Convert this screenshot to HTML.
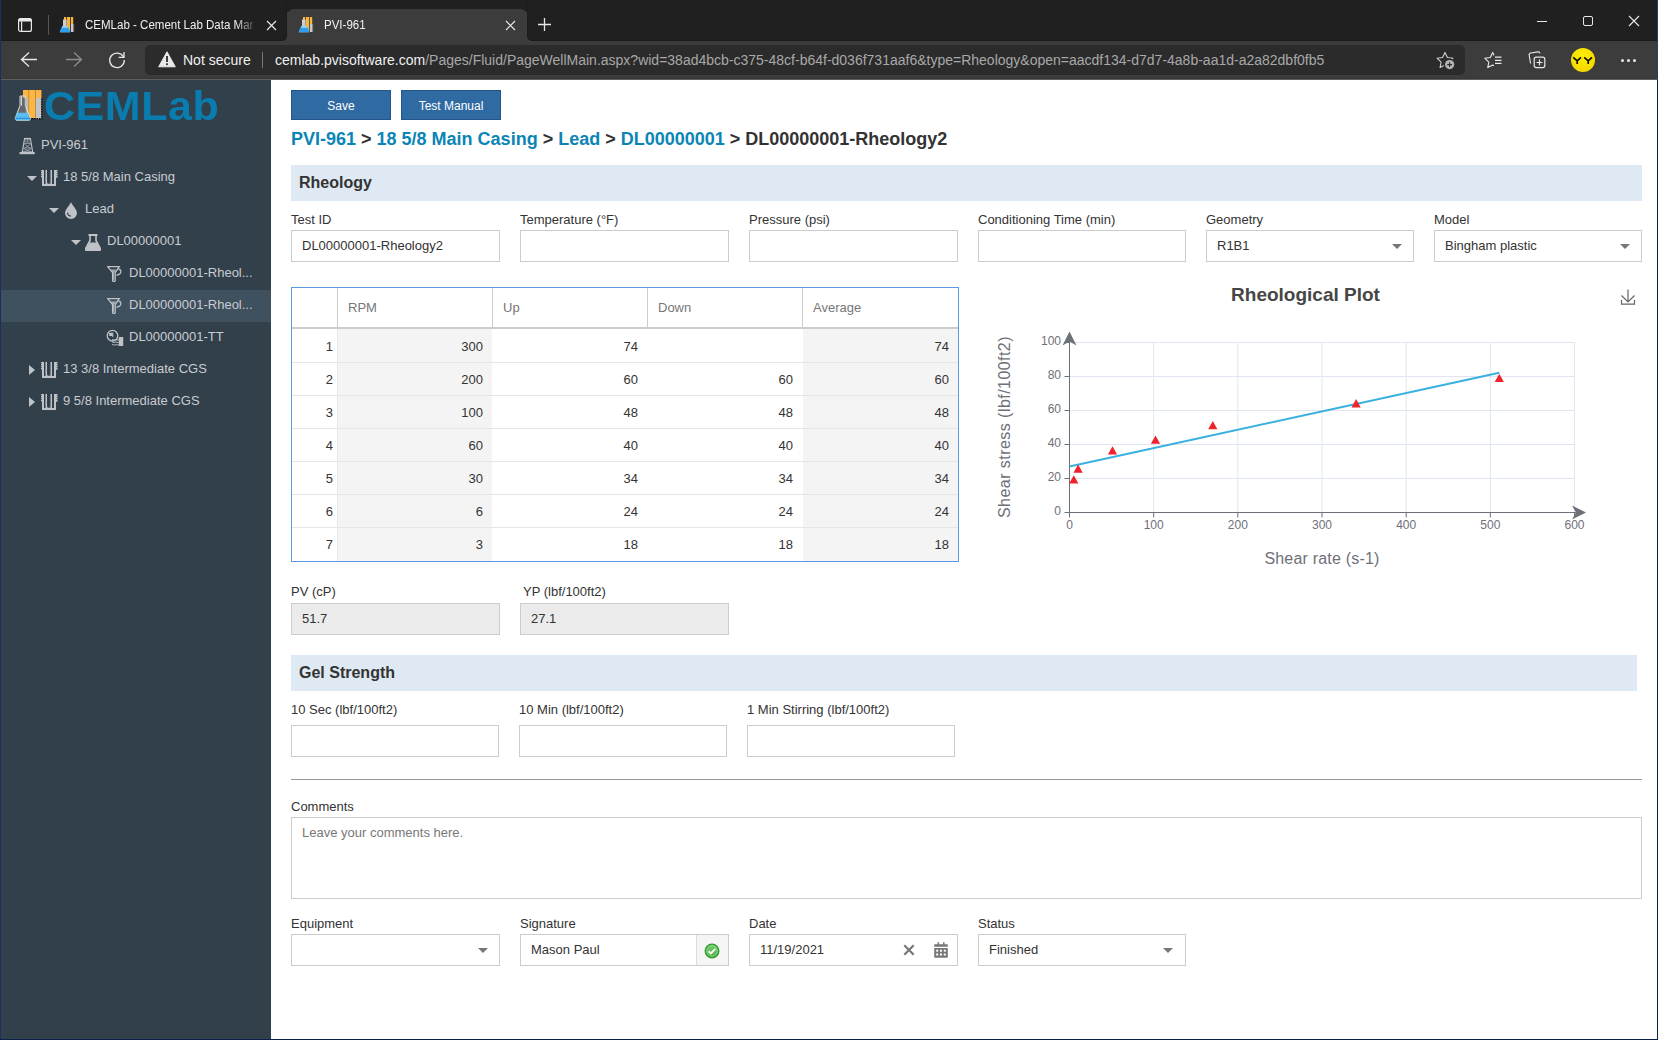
<!DOCTYPE html>
<html><head><meta charset="utf-8">
<style>
*{box-sizing:border-box;margin:0;padding:0}
html,body{width:1658px;height:1040px;overflow:hidden;background:#202020;font-family:"Liberation Sans",sans-serif}
.a{position:absolute}
#tabbar{left:0;top:0;width:1658px;height:79px;background:#3c3c3c}
#toolbar{left:0;top:0;width:0;height:0}
#tbline{left:0;top:78px;width:1658px;height:2px;background:linear-gradient(#383838 50%,#5e5e5e 50%)}
#side{left:0;top:80px;width:271px;height:960px;background:#32404c}
#main{left:271px;top:80px;width:1387px;height:960px;background:#fff}
.bl{background:#1a2a5a}
.lbl{position:absolute;font-size:13px;color:#333;line-height:15px;white-space:nowrap}
.inp{position:absolute;height:32px;border:1px solid #ccc;background:#fff;font-size:13px;color:#333;line-height:30px;padding-left:10px;white-space:nowrap}
.ro{background:#ebebeb}
.hdr{position:absolute;left:291px;height:36px;background:#dee9f4;font-size:16px;font-weight:bold;color:#333;line-height:36px;padding-left:8px}
.caret{position:absolute;width:0;height:0;border-left:5px solid transparent;border-right:5px solid transparent;border-top:5px solid #777}
.tree{position:absolute;font-size:13px;color:#c9ccd0;line-height:16px;white-space:nowrap}
.tri{position:absolute;width:0;height:0;border-left:5px solid transparent;border-right:5px solid transparent;border-top:5px solid #c0c4c8}
.trr{position:absolute;width:0;height:0;border-top:5px solid transparent;border-bottom:5px solid transparent;border-left:5px solid #c0c4c8}
.btn{height:30px;width:100px;background:#2f6aa3;border:1px solid #23558a;color:#fff;font-size:12px;line-height:30px;text-align:center}
.bc{font-size:18px;font-weight:bold;color:#333;line-height:20px;white-space:nowrap}
.lk{color:#0b85b6}
.th{color:#777}
.num{text-align:right}
.logo{font-size:41px;font-weight:bold;color:#0a7db0;line-height:48px;letter-spacing:0.5px;transform:scaleX(1.05);transform-origin:0 0;white-space:nowrap}
.tabt{font-size:12px;transform:scaleX(0.96);transform-origin:0 0;color:#f0f0f0;line-height:16px;white-space:nowrap}
.urlt{font-size:14px;line-height:18px;white-space:nowrap}
.ct{font-size:12px;fill:#6e7079;font-family:"Liberation Sans",sans-serif}
.cn{font-size:16px;fill:#6e7079;font-family:"Liberation Sans",sans-serif}
</style></head><body>
<div id="tabbar" class="a"></div>
<div id="toolbar" class="a"></div>
<div id="tbline" class="a"></div>
<div class="a" style="left:0;top:0;width:287px;height:41px;background:#202020;border-bottom:1px solid #1b1b1b;border-right:1px solid #1d1d1d;border-radius:0 0 5px 0"></div>
<div class="a" style="left:527px;top:0;width:1131px;height:41px;background:#202020;border-bottom:1px solid #1b1b1b;border-left:1px solid #1d1d1d;border-radius:0 0 0 5px"></div>
<div class="a" style="left:287px;top:0;width:240px;height:12px;background:#202020"></div>
<svg class="a" style="left:17px;top:17px" width="16" height="16" viewBox="0 0 16 16">
<rect x="1.6" y="1.6" width="12.8" height="12.8" rx="2" fill="none" stroke="#e8e8e8" stroke-width="1.2"/>
<rect x="1.6" y="1.6" width="12.8" height="3" rx="1" fill="#e8e8e8"/>
<path d="M4.6 4.5v10" stroke="#e8e8e8" stroke-width="1.2"/>
</svg>
<div class="a" style="left:48px;top:15px;width:1px;height:20px;background:#555"></div>
<svg class="a" style="left:59px;top:17px" width="16" height="16" viewBox="0 0 16 16">
<rect x="5" y="0" width="2.2" height="14" fill="#f7b638"/><rect x="8" y="0" width="3" height="14" fill="#f7b638"/><rect x="11.8" y="0" width="2.4" height="7" fill="#f7b638"/>
<rect x="11.8" y="7" width="2.4" height="8" fill="#c9c9c9"/><path d="M14.2 8h1M14.2 10h1M14.2 12h1M14.2 14h1" stroke="#e0e0e0" stroke-width="0.8"/>
<path d="M4 2.5h3.6v6l3.4 6.8h-10.4l3.4-6.8z" fill="#cfcfcf"/>
<path d="M2.4 10.5h7.2l1.6 4.8h-10.4z" fill="#2f9ef0"/><path d="M3.5 9h5l0.8 1.5h-6.6z" fill="#8fd3ff"/>
</svg>
<div class="a tabt" style="left:85px;top:17px;width:175px;overflow:hidden">CEMLab - Cement Lab Data Man</div>
<div class="a" style="left:236px;top:14px;width:24px;height:20px;background:linear-gradient(to right,rgba(32,32,32,0),#202020 90%)"></div>
<svg class="a" style="left:265.5px;top:19.5px" width="11" height="11" viewBox="0 0 11 11"><path d="M1 1L10 10M10 1L1 10" stroke="#e8e8e8" stroke-width="1.2"/></svg>
<div class="a" style="left:287px;top:9px;width:240px;height:32px;background:#3c3c3c;border-radius:7px 7px 0 0"></div>
<svg class="a" style="left:298px;top:17px" width="16" height="16" viewBox="0 0 16 16">
<rect x="5" y="0" width="2.2" height="14" fill="#f7b638"/><rect x="8" y="0" width="3" height="14" fill="#f7b638"/><rect x="11.8" y="0" width="2.4" height="7" fill="#f7b638"/>
<rect x="11.8" y="7" width="2.4" height="8" fill="#c9c9c9"/><path d="M14.2 8h1M14.2 10h1M14.2 12h1M14.2 14h1" stroke="#e0e0e0" stroke-width="0.8"/>
<path d="M4 2.5h3.6v6l3.4 6.8h-10.4l3.4-6.8z" fill="#cfcfcf"/>
<path d="M2.4 10.5h7.2l1.6 4.8h-10.4z" fill="#2f9ef0"/><path d="M3.5 9h5l0.8 1.5h-6.6z" fill="#8fd3ff"/>
</svg>
<div class="a tabt" style="left:324px;top:17px">PVI-961</div>
<svg class="a" style="left:504.5px;top:19.5px" width="11" height="11" viewBox="0 0 11 11"><path d="M1 1L10 10M10 1L1 10" stroke="#e8e8e8" stroke-width="1.2"/></svg>
<svg class="a" style="left:537px;top:17px" width="15" height="15" viewBox="0 0 15 15"><path d="M7.5 1v13M1 7.5h13" stroke="#e8e8e8" stroke-width="1.3"/></svg>
<div class="a" style="left:1537px;top:21px;width:10px;height:1px;background:#e8e8e8"></div>
<div class="a" style="left:1583px;top:16px;width:10px;height:10px;border:1px solid #e8e8e8;border-radius:2px"></div>
<svg class="a" style="left:1628.0px;top:15.0px" width="12" height="12" viewBox="0 0 12 12"><path d="M1 1L11 11M11 1L1 11" stroke="#e8e8e8" stroke-width="1.1"/></svg>
<svg class="a" style="left:19px;top:51px" width="20" height="17" viewBox="0 0 20 17"><path d="M10 1.5L2.5 8.5L10 15.5M2.5 8.5H18" fill="none" stroke="#e8e8e8" stroke-width="1.3"/></svg>
<svg class="a" style="left:64px;top:51px" width="20" height="17" viewBox="0 0 20 17"><path d="M10 1.5L17.5 8.5L10 15.5M17.5 8.5H2" fill="none" stroke="#8c8c8c" stroke-width="1.3"/></svg>
<svg class="a" style="left:107px;top:50px" width="20" height="20" viewBox="0 0 20 20"><path d="M16.5 7A7.3 7.3 0 1 0 17.3 10" fill="none" stroke="#e8e8e8" stroke-width="1.3"/><path d="M17 2v5.3h-5.3" fill="none" stroke="#e8e8e8" stroke-width="1.3"/></svg>
<div class="a" style="left:145px;top:45px;width:1320px;height:30px;background:#2b2b2b;border-radius:5px"></div>
<svg class="a" style="left:158px;top:51px" width="18" height="17" viewBox="0 0 18 17"><path d="M9 0.8L17.3 15.8H0.7z" fill="#e8e8e8" stroke="#e8e8e8" stroke-width="1" stroke-linejoin="round"/><rect x="8.1" y="5" width="1.8" height="6" fill="#2b2b2b"/><rect x="8.1" y="12.3" width="1.8" height="1.8" fill="#2b2b2b"/></svg>
<div class="a urlt" style="left:183px;top:51px;color:#f0f0f0">Not secure</div>
<div class="a" style="left:262px;top:52px;width:1px;height:16px;background:#777"></div>
<div class="a urlt" style="left:275px;top:51px"><span style="color:#f0f0f0">cemlab.pvisoftware.com</span><span style="color:#a8a8a8">/Pages/Fluid/PageWellMain.aspx?wid=38ad4bcb-c375-48cf-b64f-d036f731aaf6&amp;type=Rheology&amp;open=aacdf134-d7d7-4a8b-aa1d-a2a82dbf0fb5</span></div>
<svg class="a" style="left:1434px;top:48px" width="24" height="24" viewBox="0 0 24 24">
<defs><mask id="m1"><rect width="24" height="24" fill="#fff"/><circle cx="15.6" cy="16.6" r="6" fill="#000"/></mask></defs>
<path d="M11.00 4.40 L13.41 9.48 L18.99 10.20 L14.90 14.07 L15.94 19.60 L11.00 16.90 L6.06 19.60 L7.10 14.07 L3.01 10.20 L8.59 9.48Z" fill="none" stroke="#cfcfcf" stroke-width="1.1" stroke-linejoin="round" mask="url(#m1)"/>
<circle cx="15.6" cy="16.6" r="4.6" fill="#b4b4b4"/>
<path d="M15.6 14.2v4.8M13.2 16.6h4.8" stroke="#2b2b2b" stroke-width="1.1"/>
</svg>
<svg class="a" style="left:1482px;top:48px" width="24" height="24" viewBox="0 0 24 24">
<defs><mask id="m2"><rect width="24" height="24" fill="#fff"/><rect x="12" y="7" width="12" height="14" fill="#000"/></mask></defs>
<path d="M10.70 4.40 L13.11 9.48 L18.69 10.20 L14.60 14.07 L15.64 19.60 L10.70 16.90 L5.76 19.60 L6.80 14.07 L2.71 10.20 L8.29 9.48Z" fill="none" stroke="#e8e8e8" stroke-width="1.1" stroke-linejoin="round" mask="url(#m2)"/>
<path d="M13 9.2h6.5M13 12.3h6.5M13 15.4h6.5" stroke="#e8e8e8" stroke-width="1.2"/>
</svg>
<svg class="a" style="left:1526px;top:48px" width="22" height="22" viewBox="0 0 22 22">
<path d="M4.6 15.5L3.2 7.3a2 2 0 0 1 1.6-2.3l7-1.1a2 2 0 0 1 2.2 1.5" fill="none" stroke="#e8e8e8" stroke-width="1.1"/>
<rect x="8.2" y="9.2" width="10.6" height="10.4" rx="2" fill="none" stroke="#e8e8e8" stroke-width="1.2"/>
<path d="M13.5 11.5v6M10.5 14.5h6" stroke="#e8e8e8" stroke-width="1.2"/>
</svg>
<div class="a" style="left:1571px;top:48px;width:24px;height:24px;border-radius:50%;background:radial-gradient(circle at 50% 35%,#fff000,#f0d000)"></div>
<svg class="a" style="left:1571px;top:48px" width="24" height="24" viewBox="0 0 24 24"><path d="M2.2 9.3l4 3.6 3.8-3.6M6.2 12.9v3M13.2 9.3l4 3.6 3.8-3.6M17.2 12.9v3" fill="none" stroke="#111" stroke-width="1.7"/></svg>
<div class="a" style="left:1621px;top:59px;width:3px;height:3px;border-radius:50%;background:#e8e8e8"></div>
<div class="a" style="left:1627px;top:59px;width:3px;height:3px;border-radius:50%;background:#e8e8e8"></div>
<div class="a" style="left:1633px;top:59px;width:3px;height:3px;border-radius:50%;background:#e8e8e8"></div>
<div id="side" class="a"></div>
<div id="main" class="a"></div>
<svg class="a" style="left:12px;top:85px" width="36" height="40" viewBox="0 0 36 40">
<rect x="11" y="5" width="5.3" height="8" fill="#fdb544"/>
<rect x="13.8" y="12.8" width="2.7" height="20" fill="#bdbdbd"/>
<rect x="16.5" y="5" width="7" height="28" fill="#fdb544"/><rect x="16.5" y="5" width="0.8" height="28" fill="#e09a30"/>
<rect x="23.7" y="5" width="5.7" height="8" fill="#fdb544"/>
<rect x="23.7" y="13" width="5.7" height="21" fill="#c4c4c4"/>
<path d="M29.8 13.5v21M17 33.6h12.6" stroke="#000" stroke-width="1.2" stroke-dasharray="1.6 0.9"/>
<path d="M8 11h5.3v9.5l5 12.5c0.4 1.2-0.3 2.3-1.5 2.3h-12c-1.2 0-1.9-1.1-1.5-2.3l4.7-12.5z" fill="#8a8a8a" fill-opacity="0.55" stroke="#e8e8e8" stroke-width="0.9"/>
<path d="M9.5 11.5v9" stroke="#d8d8d8" stroke-width="1"/>
<path d="M5 27.8h10.6l2.6 5.6c0.4 1.1-0.2 1.9-1.3 1.9h-12.2c-1.1 0-1.7-0.8-1.3-1.9z" fill="#5cbdf0"/>
<path d="M3.4 33.3h14.6" stroke="#2a8ee0" stroke-width="1.2"/>
</svg>
<div class="a logo" style="left:44px;top:82px">CEMLab</div>
<div class="a" style="left:1px;top:290px;width:270px;height:32px;background:#3f505e"></div>
<div class="tree" style="left:41px;top:137px">PVI-961</div>
<svg class="a" style="left:17px;top:135px" width="20" height="22" viewBox="0 0 20 22">
<path d="M7.6 3.5h5.8l2.3 13.5h-10.4z" fill="none" stroke="#bfc3c7" stroke-width="1.1"/>
<path d="M7.6 3.6h5.8" stroke="#bfc3c7" stroke-width="1.4"/>
<path d="M9 4v4M10.5 4v4M12 4v4" stroke="#bfc3c7" stroke-width="0.7" opacity="0.8"/>
<path d="M7 8.5h7M7.2 9l6.3 4.5M13.8 9l-6.6 4.5M6.5 13h8M6.3 13.5l8 3.3M14.7 13.5l-8.4 3.3" stroke="#bfc3c7" stroke-width="0.7" opacity="0.85"/>
<rect x="2.5" y="17" width="15.2" height="2.2" fill="#bfc3c7"/>
</svg>
<div class="tri" style="left:27px;top:176px;border-top-width:5px"></div>
<div class="tree" style="left:63px;top:169px">18 5/8 Main Casing</div>
<svg class="a" style="left:40px;top:170px" width="18" height="17" viewBox="0 0 18 17">
<path d="M1 0h3v8h0v8h-2v-8h-1z" fill="#bfc3c7"/><path d="M14 0h3.5v8h-1.5v8h-2z" fill="#bfc3c7"/>
<path d="M1 1.5h0.8M1 3.5h0.8M1 5.5h0.8M1 7.5h0.8M16.7 1.5h0.8M16.7 3.5h0.8M16.7 5.5h0.8M16.7 7.5h0.8" stroke="#333f4c" stroke-width="0.8"/>
<rect x="5.5" y="0" width="1.5" height="14.5" fill="#bfc3c7"/><rect x="10.5" y="0" width="1.5" height="14.5" fill="#bfc3c7"/>
<rect x="2" y="14" width="14" height="2" fill="#bfc3c7"/>
<path d="M7 13.3h3.5" stroke="#bfc3c7" stroke-width="0.8" stroke-dasharray="1 0.8"/>
</svg>
<div class="tri" style="left:49px;top:208px;border-top-width:5px"></div>
<div class="tree" style="left:85px;top:201px">Lead</div>
<svg class="a" style="left:64px;top:201px" width="14" height="18" viewBox="0 0 14 18">
<path d="M7 1c1 3 6 7.5 6 11a6 6 0 0 1-12 0c0-3.5 5-8 6-11z" fill="#bfc3c7"/>
<path d="M3.6 11.5a3.6 3.6 0 0 0 3.4 3.6" fill="none" stroke="#333f4c" stroke-width="1.1"/>
</svg>
<div class="tri" style="left:71px;top:240px;border-top-width:5px"></div>
<div class="tree" style="left:107px;top:233px">DL00000001</div>
<svg class="a" style="left:85px;top:233px" width="16" height="18" viewBox="0 0 16 18">
<rect x="3.5" y="1" width="9" height="2" fill="#bfc3c7"/>
<path d="M5 3v4.5l-4.3 8c-0.5 1 0 1.8 1 1.8h12.6c1 0 1.5-0.8 1-1.8l-4.3-8v-4.5" fill="none" stroke="#bfc3c7" stroke-width="1.6"/>
<path d="M4.5 9.5h7l3.6 6.6c0.3 0.7 0 1.2-0.8 1.2h-12.6c-0.8 0-1.1-0.5-0.8-1.2z" fill="#bfc3c7"/>
</svg>
<div class="tree" style="left:129px;top:265px">DL00000001-Rheol...</div>
<svg class="a" style="left:107px;top:266px" width="15" height="16" viewBox="0 0 15 16">
<path d="M0.7 0.7h11.5l-4 6v7.5a1.3 1.3 0 0 1-2.6 0v-7.5z" fill="none" stroke="#bfc3c7" stroke-width="1.3"/>
<path d="M3.5 3.5h5.8l-2.2 3.3v7h-1.4v-7z" fill="#bfc3c7" opacity="0.8"/>
<path d="M11.5 3a2.8 2.8 0 0 1 1 5.2l-3 1.2" fill="none" stroke="#bfc3c7" stroke-width="1.3"/>
</svg>
<div class="tree" style="left:129px;top:297px">DL00000001-Rheol...</div>
<svg class="a" style="left:107px;top:298px" width="15" height="16" viewBox="0 0 15 16">
<path d="M0.7 0.7h11.5l-4 6v7.5a1.3 1.3 0 0 1-2.6 0v-7.5z" fill="none" stroke="#bfc3c7" stroke-width="1.3"/>
<path d="M3.5 3.5h5.8l-2.2 3.3v7h-1.4v-7z" fill="#bfc3c7" opacity="0.8"/>
<path d="M11.5 3a2.8 2.8 0 0 1 1 5.2l-3 1.2" fill="none" stroke="#bfc3c7" stroke-width="1.3"/>
</svg>
<div class="tree" style="left:129px;top:329px">DL00000001-TT</div>
<svg class="a" style="left:104px;top:326px" width="22" height="24" viewBox="0 0 22 24">
<circle cx="8.5" cy="9.7" r="5.3" fill="none" stroke="#bfc3c7" stroke-width="1.3"/>
<path d="M8.7 6.8v3.2h-3.6a3.6 3.6 0 0 1 3.6-3.6z" fill="#bfc3c7"/>
<path d="M5 7.5h3.8v3.5" fill="none" stroke="#bfc3c7" stroke-width="1"/>
<rect x="14.8" y="11" width="4.4" height="9" fill="#bfc3c7"/>
<path d="M8 13.8c1.2-0.8 2.2 0.8 3.4 0s2.2 0.8 3.4 0M8 16.3c1.2-0.8 2.2 0.8 3.4 0s2.2 0.8 3.4 0M8 18.8c1.2-0.8 2.2 0.8 3.4 0s2.2 0.8 3.4 0" fill="none" stroke="#bfc3c7" stroke-width="1"/>
</svg>
<div class="trr" style="left:29px;top:365px;border-left-width:6px"></div>
<div class="tree" style="left:63px;top:361px">13 3/8 Intermediate CGS</div>
<svg class="a" style="left:40px;top:362px" width="18" height="17" viewBox="0 0 18 17">
<path d="M1 0h3v8h0v8h-2v-8h-1z" fill="#bfc3c7"/><path d="M14 0h3.5v8h-1.5v8h-2z" fill="#bfc3c7"/>
<path d="M1 1.5h0.8M1 3.5h0.8M1 5.5h0.8M1 7.5h0.8M16.7 1.5h0.8M16.7 3.5h0.8M16.7 5.5h0.8M16.7 7.5h0.8" stroke="#333f4c" stroke-width="0.8"/>
<rect x="5.5" y="0" width="1.5" height="14.5" fill="#bfc3c7"/><rect x="10.5" y="0" width="1.5" height="14.5" fill="#bfc3c7"/>
<rect x="2" y="14" width="14" height="2" fill="#bfc3c7"/>
<path d="M7 13.3h3.5" stroke="#bfc3c7" stroke-width="0.8" stroke-dasharray="1 0.8"/>
</svg>
<div class="trr" style="left:29px;top:397px;border-left-width:6px"></div>
<div class="tree" style="left:63px;top:393px">9 5/8 Intermediate CGS</div>
<svg class="a" style="left:40px;top:394px" width="18" height="17" viewBox="0 0 18 17">
<path d="M1 0h3v8h0v8h-2v-8h-1z" fill="#bfc3c7"/><path d="M14 0h3.5v8h-1.5v8h-2z" fill="#bfc3c7"/>
<path d="M1 1.5h0.8M1 3.5h0.8M1 5.5h0.8M1 7.5h0.8M16.7 1.5h0.8M16.7 3.5h0.8M16.7 5.5h0.8M16.7 7.5h0.8" stroke="#333f4c" stroke-width="0.8"/>
<rect x="5.5" y="0" width="1.5" height="14.5" fill="#bfc3c7"/><rect x="10.5" y="0" width="1.5" height="14.5" fill="#bfc3c7"/>
<rect x="2" y="14" width="14" height="2" fill="#bfc3c7"/>
<path d="M7 13.3h3.5" stroke="#bfc3c7" stroke-width="0.8" stroke-dasharray="1 0.8"/>
</svg>

<div class="a btn" style="left:291px;top:90px">Save</div>
<div class="a btn" style="left:401px;top:90px">Test Manual</div>
<div class="a bc" style="left:291px;top:129px"><span class="lk">PVI-961</span> &gt; <span class="lk">18 5/8 Main Casing</span> &gt; <span class="lk">Lead</span> &gt; <span class="lk">DL00000001</span> &gt; DL00000001-Rheology2</div>
<div class="hdr" style="top:165px;width:1351px">Rheology</div>
<div class="lbl" style="left:291px;top:212px">Test ID</div>
<div class="inp" style="left:291px;top:230px;width:209px">DL00000001-Rheology2</div>
<div class="lbl" style="left:520px;top:212px">Temperature (°F)</div>
<div class="inp" style="left:520px;top:230px;width:209px"></div>
<div class="lbl" style="left:749px;top:212px">Pressure (psi)</div>
<div class="inp" style="left:749px;top:230px;width:209px"></div>
<div class="lbl" style="left:978px;top:212px">Conditioning Time (min)</div>
<div class="inp" style="left:978px;top:230px;width:208px"></div>
<div class="lbl" style="left:1206px;top:212px">Geometry</div>
<div class="inp" style="left:1206px;top:230px;width:208px">R1B1</div>
<div class="caret" style="left:1392px;top:244px"></div>
<div class="lbl" style="left:1434px;top:212px">Model</div>
<div class="inp" style="left:1434px;top:230px;width:208px">Bingham plastic</div>
<div class="caret" style="left:1620px;top:244px"></div>
<div class="a" style="left:291px;top:287px;width:668px;height:275px;border:1px solid #5a9ae2;background:#fff"></div>
<div class="a" style="left:337px;top:288px;width:1px;height:39px;background:#ccc"></div>
<div class="a" style="left:492px;top:288px;width:1px;height:39px;background:#ccc"></div>
<div class="a" style="left:647px;top:288px;width:1px;height:39px;background:#ccc"></div>
<div class="a" style="left:802px;top:288px;width:1px;height:39px;background:#ccc"></div>
<div class="a" style="left:292px;top:327px;width:666px;height:2px;background:#ccc"></div>
<div class="lbl th" style="left:348px;top:300px">RPM</div>
<div class="lbl th" style="left:503px;top:300px">Up</div>
<div class="lbl th" style="left:658px;top:300px">Down</div>
<div class="lbl th" style="left:813px;top:300px">Average</div>
<div class="a" style="left:338px;top:329px;width:154px;height:232px;background:#f4f4f4"></div>
<div class="a" style="left:803px;top:329px;width:155px;height:232px;background:#f4f4f4"></div>
<div class="a" style="left:337px;top:329px;width:1px;height:232px;background:#e9e9e9"></div>
<div class="a" style="left:292px;top:362px;width:666px;height:1px;background:#e6e6e6"></div>
<div class="a" style="left:292px;top:395px;width:666px;height:1px;background:#e6e6e6"></div>
<div class="a" style="left:292px;top:428px;width:666px;height:1px;background:#e6e6e6"></div>
<div class="a" style="left:292px;top:461px;width:666px;height:1px;background:#e6e6e6"></div>
<div class="a" style="left:292px;top:494px;width:666px;height:1px;background:#e6e6e6"></div>
<div class="a" style="left:292px;top:527px;width:666px;height:1px;background:#e6e6e6"></div>
<div class="lbl num" style="left:233px;top:339px;width:100px">1</div>
<div class="lbl num" style="left:383px;top:339px;width:100px">300</div>
<div class="lbl num" style="left:538px;top:339px;width:100px">74</div>
<div class="lbl num" style="left:849px;top:339px;width:100px">74</div>
<div class="lbl num" style="left:233px;top:372px;width:100px">2</div>
<div class="lbl num" style="left:383px;top:372px;width:100px">200</div>
<div class="lbl num" style="left:538px;top:372px;width:100px">60</div>
<div class="lbl num" style="left:693px;top:372px;width:100px">60</div>
<div class="lbl num" style="left:849px;top:372px;width:100px">60</div>
<div class="lbl num" style="left:233px;top:405px;width:100px">3</div>
<div class="lbl num" style="left:383px;top:405px;width:100px">100</div>
<div class="lbl num" style="left:538px;top:405px;width:100px">48</div>
<div class="lbl num" style="left:693px;top:405px;width:100px">48</div>
<div class="lbl num" style="left:849px;top:405px;width:100px">48</div>
<div class="lbl num" style="left:233px;top:438px;width:100px">4</div>
<div class="lbl num" style="left:383px;top:438px;width:100px">60</div>
<div class="lbl num" style="left:538px;top:438px;width:100px">40</div>
<div class="lbl num" style="left:693px;top:438px;width:100px">40</div>
<div class="lbl num" style="left:849px;top:438px;width:100px">40</div>
<div class="lbl num" style="left:233px;top:471px;width:100px">5</div>
<div class="lbl num" style="left:383px;top:471px;width:100px">30</div>
<div class="lbl num" style="left:538px;top:471px;width:100px">34</div>
<div class="lbl num" style="left:693px;top:471px;width:100px">34</div>
<div class="lbl num" style="left:849px;top:471px;width:100px">34</div>
<div class="lbl num" style="left:233px;top:504px;width:100px">6</div>
<div class="lbl num" style="left:383px;top:504px;width:100px">6</div>
<div class="lbl num" style="left:538px;top:504px;width:100px">24</div>
<div class="lbl num" style="left:693px;top:504px;width:100px">24</div>
<div class="lbl num" style="left:849px;top:504px;width:100px">24</div>
<div class="lbl num" style="left:233px;top:537px;width:100px">7</div>
<div class="lbl num" style="left:383px;top:537px;width:100px">3</div>
<div class="lbl num" style="left:538px;top:537px;width:100px">18</div>
<div class="lbl num" style="left:693px;top:537px;width:100px">18</div>
<div class="lbl num" style="left:849px;top:537px;width:100px">18</div>
<div class="lbl" style="left:291px;top:584px">PV (cP)</div>
<div class="inp ro" style="left:291px;top:603px;width:209px">51.7</div>
<div class="lbl" style="left:523px;top:584px">YP (lbf/100ft2)</div>
<div class="inp ro" style="left:520px;top:603px;width:209px">27.1</div>
<div class="hdr" style="top:655px;width:1346px">Gel Strength</div>
<div class="lbl" style="left:291px;top:702px">10 Sec (lbf/100ft2)</div>
<div class="inp" style="left:291px;top:725px;width:208px"></div>
<div class="lbl" style="left:519px;top:702px">10 Min (lbf/100ft2)</div>
<div class="inp" style="left:519px;top:725px;width:208px"></div>
<div class="lbl" style="left:747px;top:702px">1 Min Stirring (lbf/100ft2)</div>
<div class="inp" style="left:747px;top:725px;width:208px"></div>
<div class="a" style="left:291px;top:779px;width:1351px;height:1px;background:#999"></div>
<div class="lbl" style="left:291px;top:799px">Comments</div>
<div class="inp" style="left:291px;top:817px;width:1351px;height:82px;line-height:15px;padding-top:7px;color:#777">Leave your comments here.</div>
<div class="lbl" style="left:291px;top:916px">Equipment</div>
<div class="lbl" style="left:520px;top:916px">Signature</div>
<div class="lbl" style="left:749px;top:916px">Date</div>
<div class="lbl" style="left:978px;top:916px">Status</div>
<div class="inp" style="left:291px;top:934px;width:209px"></div><div class="caret" style="left:478px;top:948px"></div>
<div class="inp" style="left:520px;top:934px;width:209px">Mason Paul</div>
<div class="a" style="left:696px;top:935px;width:32px;height:30px;background:#f5f5f5;border-left:1px solid #dcdcdc"></div>
<div class="inp" style="left:749px;top:934px;width:209px">11/19/2021</div>
<div class="inp" style="left:978px;top:934px;width:208px">Finished</div><div class="caret" style="left:1163px;top:948px"></div>
<svg class="a" style="left:0;top:0" width="1658" height="1040" viewBox="0 0 1658 1040">
<line x1="1153.7" y1="342.5" x2="1153.7" y2="512.5" stroke="#e0e6f1" stroke-width="1"/>
<line x1="1237.8" y1="342.5" x2="1237.8" y2="512.5" stroke="#e0e6f1" stroke-width="1"/>
<line x1="1322.0" y1="342.5" x2="1322.0" y2="512.5" stroke="#e0e6f1" stroke-width="1"/>
<line x1="1406.2" y1="342.5" x2="1406.2" y2="512.5" stroke="#e0e6f1" stroke-width="1"/>
<line x1="1490.3" y1="342.5" x2="1490.3" y2="512.5" stroke="#e0e6f1" stroke-width="1"/>
<line x1="1574.5" y1="342.5" x2="1574.5" y2="512.5" stroke="#e0e6f1" stroke-width="1"/>
<line x1="1069.5" y1="478.5" x2="1574.5" y2="478.5" stroke="#e0e6f1" stroke-width="1"/>
<line x1="1069.5" y1="444.5" x2="1574.5" y2="444.5" stroke="#e0e6f1" stroke-width="1"/>
<line x1="1069.5" y1="410.5" x2="1574.5" y2="410.5" stroke="#e0e6f1" stroke-width="1"/>
<line x1="1069.5" y1="376.5" x2="1574.5" y2="376.5" stroke="#e0e6f1" stroke-width="1"/>
<line x1="1069.5" y1="342.5" x2="1574.5" y2="342.5" stroke="#e0e6f1" stroke-width="1"/>
<line x1="1069.5" y1="512.5" x2="1580" y2="512.5" stroke="#6e7079" stroke-width="1"/>
<line x1="1069.5" y1="512.5" x2="1069.5" y2="338" stroke="#6e7079" stroke-width="1"/>
<path d="M1586 512.5 L1572 505.5 L1576 512.5 L1572 519.5 Z" fill="#6e7079"/>
<path d="M1069.5 331.5 L1062.5 345.5 L1069.5 341.5 L1076.5 345.5 Z" fill="#6e7079"/>
<line x1="1069.5" y1="512.5" x2="1069.5" y2="517.5" stroke="#6e7079" stroke-width="1"/>
<text x="1069.5" y="529" text-anchor="middle" class="ct">0</text>
<line x1="1153.7" y1="512.5" x2="1153.7" y2="517.5" stroke="#6e7079" stroke-width="1"/>
<text x="1153.7" y="529" text-anchor="middle" class="ct">100</text>
<line x1="1237.8" y1="512.5" x2="1237.8" y2="517.5" stroke="#6e7079" stroke-width="1"/>
<text x="1237.8" y="529" text-anchor="middle" class="ct">200</text>
<line x1="1322.0" y1="512.5" x2="1322.0" y2="517.5" stroke="#6e7079" stroke-width="1"/>
<text x="1322.0" y="529" text-anchor="middle" class="ct">300</text>
<line x1="1406.2" y1="512.5" x2="1406.2" y2="517.5" stroke="#6e7079" stroke-width="1"/>
<text x="1406.2" y="529" text-anchor="middle" class="ct">400</text>
<line x1="1490.3" y1="512.5" x2="1490.3" y2="517.5" stroke="#6e7079" stroke-width="1"/>
<text x="1490.3" y="529" text-anchor="middle" class="ct">500</text>
<line x1="1574.5" y1="512.5" x2="1574.5" y2="517.5" stroke="#6e7079" stroke-width="1"/>
<text x="1574.5" y="529" text-anchor="middle" class="ct">600</text>
<line x1="1064.5" y1="512.5" x2="1069.5" y2="512.5" stroke="#6e7079" stroke-width="1"/>
<text x="1061" y="515.0" text-anchor="end" class="ct">0</text>
<line x1="1064.5" y1="478.5" x2="1069.5" y2="478.5" stroke="#6e7079" stroke-width="1"/>
<text x="1061" y="481.0" text-anchor="end" class="ct">20</text>
<line x1="1064.5" y1="444.5" x2="1069.5" y2="444.5" stroke="#6e7079" stroke-width="1"/>
<text x="1061" y="447.0" text-anchor="end" class="ct">40</text>
<line x1="1064.5" y1="410.5" x2="1069.5" y2="410.5" stroke="#6e7079" stroke-width="1"/>
<text x="1061" y="413.0" text-anchor="end" class="ct">60</text>
<line x1="1064.5" y1="376.5" x2="1069.5" y2="376.5" stroke="#6e7079" stroke-width="1"/>
<text x="1061" y="379.0" text-anchor="end" class="ct">80</text>
<line x1="1064.5" y1="342.5" x2="1069.5" y2="342.5" stroke="#6e7079" stroke-width="1"/>
<text x="1061" y="345.0" text-anchor="end" class="ct">100</text>
<line x1="1069.5" y1="466.4" x2="1499.3" y2="372.7" stroke="#3ab0de" stroke-width="2"/>
<path d="M1499.3 373.7 L1503.9 382.0 L1494.7 382.0 Z" fill="#f0222a"/>
<path d="M1356.1 399.1 L1360.7 407.4 L1351.5 407.4 Z" fill="#f0222a"/>
<path d="M1212.8 420.9 L1217.4 429.2 L1208.2 429.2 Z" fill="#f0222a"/>
<path d="M1155.5 435.4 L1160.1 443.7 L1150.9 443.7 Z" fill="#f0222a"/>
<path d="M1112.5 446.3 L1117.1 454.6 L1107.9 454.6 Z" fill="#f0222a"/>
<path d="M1078.1 464.4 L1082.7 472.7 L1073.5 472.7 Z" fill="#f0222a"/>
<path d="M1073.8 475.3 L1078.4 483.6 L1069.2 483.6 Z" fill="#f0222a"/>
<text x="1305.5" y="301" text-anchor="middle" style="font-size:19px;font-weight:bold;fill:#464646">Rheological Plot</text>
<text x="1322" y="564" text-anchor="middle" class="cn" style="letter-spacing:0.2px">Shear rate (s-1)</text>
<text transform="translate(1010 427) rotate(-90)" text-anchor="middle" class="cn" style="letter-spacing:0.45px">Shear stress (lbf/100ft2)</text>
<path d="M1628 289.5v12.5M1621.5 295.5l6.5 6.5 6.5-6.5M1621.5 300v4.2h13v-4.2" fill="none" stroke="#666" stroke-width="1.2"/>
</svg>
<svg class="a" style="left:703px;top:942px" width="18" height="18" viewBox="0 0 18 18">
<defs><linearGradient id="gg" x1="0" y1="0" x2="0" y2="1"><stop offset="0" stop-color="#6fcf6a"/><stop offset="1" stop-color="#4fae45"/></linearGradient></defs>
<circle cx="9" cy="9" r="6.8" fill="url(#gg)" stroke="#2f9a2a" stroke-width="1.3"/>
<circle cx="9" cy="9" r="5.3" fill="none" stroke="#9ee09a" stroke-width="0.6"/>
<path d="M5.6 9.2l2.3 2.2 4.4-4.6" fill="none" stroke="#fff" stroke-width="1.9"/>
</svg>
<svg class="a" style="left:903px;top:944px" width="12" height="12" viewBox="0 0 12 12"><path d="M1.3 1.3L10.7 10.7M10.7 1.3L1.3 10.7" stroke="#777" stroke-width="2.2"/></svg>
<svg class="a" style="left:934px;top:942px" width="14" height="16" viewBox="0 0 14 16">
<rect x="3.5" y="0.3" width="1.6" height="2.5" fill="#777"/><rect x="9" y="0.3" width="1.6" height="2.5" fill="#777"/>
<rect x="0.2" y="2.2" width="13.6" height="2.6" rx="0.6" fill="#777"/>
<path d="M0.2 5.9h13.6v9a0.8 0.8 0 0 1-0.8 0.8h-12a0.8 0.8 0 0 1-0.8-0.8z" fill="#777"/>
<rect x="2.2" y="7.7" width="2" height="2" fill="#fff"/><rect x="6" y="7.7" width="2" height="2" fill="#fff"/><rect x="9.8" y="7.7" width="2" height="2" fill="#fff"/>
<rect x="2.2" y="11.5" width="2" height="2" fill="#fff"/><rect x="6" y="11.5" width="2" height="2" fill="#fff"/><rect x="9.8" y="11.5" width="2" height="2" fill="#fff"/>
</svg>
<!-- window border -->
<div class="a" style="left:0;top:0;width:1px;height:1040px;background:#1a3064"></div>
<div class="a" style="left:1657px;top:0;width:1px;height:1040px;background:linear-gradient(#28406a 80px,#0e1f4c 80px)"></div>
<div class="a" style="left:0;top:1039px;width:1658px;height:1px;background:#0d1f4d"></div>
</body></html>
